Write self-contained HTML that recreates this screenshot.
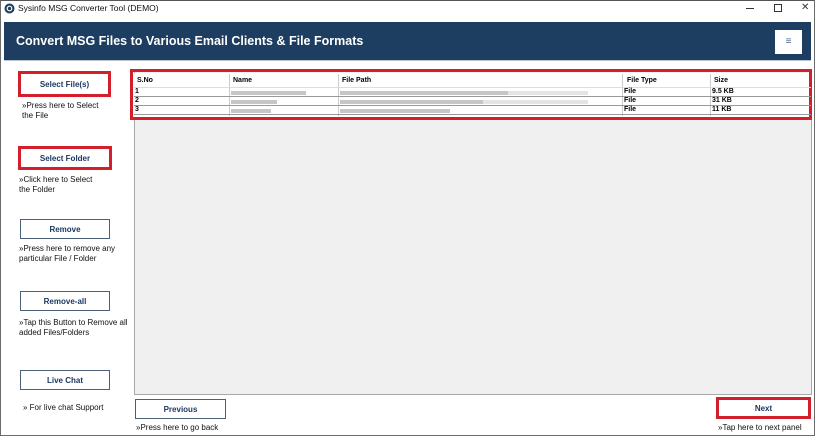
<!DOCTYPE html>
<html><head><meta charset="utf-8"><style>
*{margin:0;padding:0;box-sizing:border-box}
body{width:815px;height:436px;overflow:hidden;background:#fff;font-family:"Liberation Sans",sans-serif;position:relative;color:#000}
.a{position:absolute}
.win{left:0;top:0;width:815px;height:436px;border:1px solid #6b6b6b;border-top:1px solid #555}
.hdr{left:4px;top:22px;width:807px;height:39px;background:#1d3e60;border-bottom:1px solid #b8c4cf}
.btn{position:absolute;background:#fff;border:1px solid #4a5f78;color:#17365d;font-weight:bold;font-size:8px;display:flex;align-items:center;justify-content:center}
.red{border:3px solid #d21f2b}
.note{position:absolute;font-size:8px;line-height:10px;color:#111}
.blur{position:absolute;height:4px;background:#b8b8b8;opacity:.8}
.cell{position:absolute;font-size:7px;font-weight:bold}
</style></head><body>
<div class="a win"></div>
<svg class="a" style="left:4px;top:3px" width="11" height="11" viewBox="0 0 11 11"><circle cx="5.5" cy="5.5" r="5" fill="#1d3e60"/><circle cx="5.5" cy="5.5" r="2.3" fill="none" stroke="#fff" stroke-width="1.2"/></svg>
<div class="a" style="left:18px;top:3px;font-size:8.5px;color:#111">Sysinfo MSG Converter Tool (DEMO)</div>
<div class="a" style="left:746px;top:8px;width:8px;height:1px;background:#333"></div>
<div class="a" style="left:774px;top:4px;width:8px;height:8px;border:1px solid #333"></div>
<div class="a" style="left:801px;top:2px;font-size:10px;color:#333">✕</div>
<div class="a hdr"></div>
<div class="a" style="left:16px;top:34px;font-size:12.5px;font-weight:bold;color:#fff">Convert MSG Files to Various Email Clients &amp; File Formats</div>
<div class="a" style="left:775px;top:30px;width:27px;height:24px;background:#fff;color:#4a6b8a;font-size:10px;text-align:center;line-height:24px">≡</div>

<div class="btn red" style="left:18px;top:71px;width:93px;height:26px">Select File(s)</div>
<div class="note" style="left:22px;top:101px">»Press here to Select<br>the File</div>
<div class="btn red" style="left:18px;top:146px;width:94px;height:24px">Select Folder</div>
<div class="note" style="left:19px;top:175px">»Click here to Select<br>the Folder</div>
<div class="btn" style="left:20px;top:219px;width:90px;height:20px">Remove</div>
<div class="note" style="left:19px;top:244px">»Press here to remove any<br>particular File / Folder</div>
<div class="btn" style="left:20px;top:291px;width:90px;height:20px">Remove-all</div>
<div class="note" style="left:19px;top:318px">»Tap this Button to Remove all<br>added Files/Folders</div>
<div class="btn" style="left:20px;top:370px;width:90px;height:20px">Live Chat</div>
<div class="note" style="left:23px;top:403px">» For live chat Support</div>

<div class="a" style="left:134px;top:70px;width:678px;height:325px;background:#f0f0f0;border:1px solid #a8a8a8"></div>
<div class="a" style="left:134px;top:73px;width:677px;height:44px;background:#fff"></div>
<div class="a" style="left:130px;top:69px;width:682px;height:51px;border:3px solid #d21f2b"></div>
<div class="a" style="left:229px;top:74px;width:1px;height:42px;background:#ccc"></div>
<div class="a" style="left:338px;top:74px;width:1px;height:42px;background:#ccc"></div>
<div class="a" style="left:622px;top:74px;width:1px;height:42px;background:#ccc"></div>
<div class="a" style="left:710px;top:74px;width:1px;height:42px;background:#ccc"></div>
<div class="a" style="left:134px;top:96px;width:677px;height:1px;background:#999"></div>
<div class="a" style="left:134px;top:105px;width:677px;height:1px;background:#999"></div>
<div class="a" style="left:134px;top:114px;width:677px;height:1px;background:#999"></div>
<div class="a" style="left:134px;top:87px;width:677px;height:1px;background:#ddd"></div>
<div class="cell" style="left:137px;top:77px">S.No</div>
<div class="cell" style="left:233px;top:77px">Name</div>
<div class="cell" style="left:342px;top:77px">File Path</div>
<div class="cell" style="left:627px;top:77px">File Type</div>
<div class="cell" style="left:714px;top:77px">Size</div>
<div class="cell" style="left:135px;top:88px">1</div>
<div class="cell" style="left:135px;top:97px">2</div>
<div class="cell" style="left:135px;top:106px">3</div>
<div class="blur" style="left:231px;top:91px;width:75px"></div>
<div class="blur" style="left:231px;top:100px;width:46px"></div>
<div class="blur" style="left:231px;top:109px;width:40px"></div>
<div class="blur" style="left:340px;top:91px;width:168px"></div>
<div class="blur" style="left:340px;top:100px;width:143px"></div>
<div class="blur" style="left:340px;top:109px;width:110px"></div>
<div class="a" style="left:508px;top:91px;width:80px;height:4px;background:#e4e4e4"></div>
<div class="a" style="left:483px;top:100px;width:105px;height:4px;background:#e4e4e4"></div>
<div class="cell" style="left:624px;top:88px">File</div>
<div class="cell" style="left:624px;top:97px">File</div>
<div class="cell" style="left:624px;top:106px">File</div>
<div class="cell" style="left:712px;top:88px">9.5 KB</div>
<div class="cell" style="left:712px;top:97px">31 KB</div>
<div class="cell" style="left:712px;top:106px">11 KB</div>

<div class="btn" style="left:135px;top:399px;width:91px;height:20px">Previous</div>
<div class="note" style="left:136px;top:423px">»Press here to go back</div>
<div class="btn red" style="left:716px;top:397px;width:95px;height:22px">Next</div>
<div class="note" style="left:718px;top:423px">»Tap here to next panel</div>
</body></html>
